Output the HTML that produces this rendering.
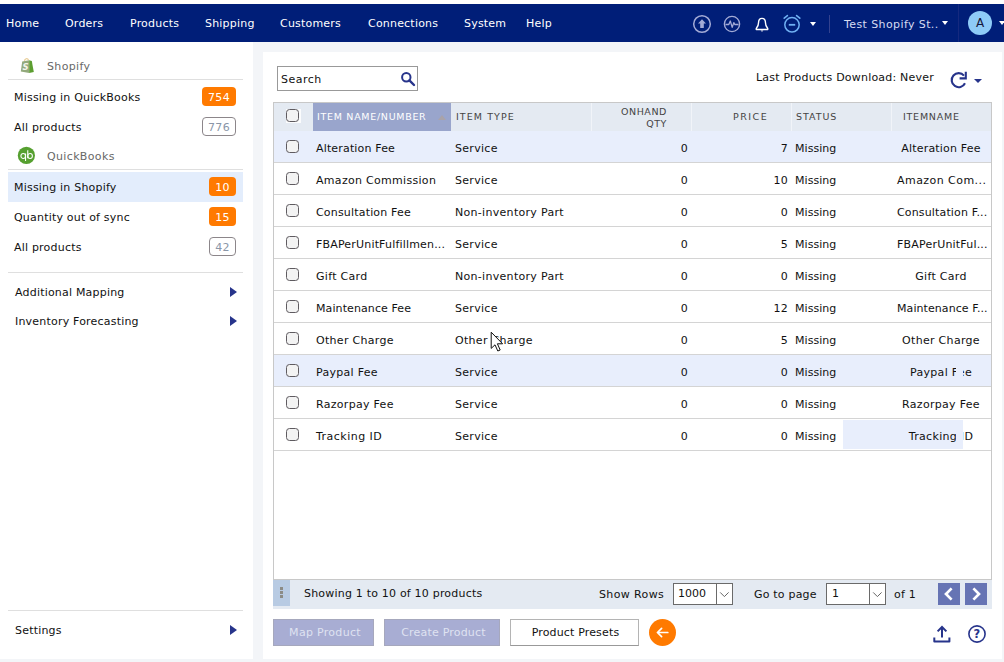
<!DOCTYPE html>
<html lang="en">
<head>
<meta charset="utf-8">
<title>Products</title>
<style>
*{box-sizing:border-box;margin:0;padding:0}
html,body{width:1004px;height:662px;overflow:hidden;background:#f3f5f8}
body{position:relative;font-family:"DejaVu Sans","Liberation Sans",sans-serif;font-size:11px;letter-spacing:0.2px;color:#111;line-height:16px}
.abs{position:absolute;white-space:nowrap}
#topstrip{left:0;top:0;width:1004px;height:4px;background:#fff}
#nav{left:0;top:4px;width:1004px;height:38px;background:#001e78}
#nav .mi{position:absolute;top:12px;color:#fff;font-size:11px;line-height:16px}
#side{left:0;top:42px;width:253px;height:617px;background:#fff}
#panel{left:263px;top:52px;width:739px;height:607px;background:#fff}
.sl{position:absolute;left:14px;font-size:11px;color:#111}
.hd{position:absolute;left:47px;font-size:11px;color:#686868;letter-spacing:0.35px}
.badge{position:absolute;height:19px;border-radius:4px;font-size:11px;line-height:21px;letter-spacing:0.3px;text-align:center;color:#fff;background:#ff7a00}
.badge.o{background:#fff;color:#8a96a8;border:1px solid #8c868a;line-height:19px}
.hr{position:absolute;height:1px;background:#dfdfdf}
.tri{position:absolute;width:0;height:0;border-left:7px solid #27348b;border-top:5px solid transparent;border-bottom:5px solid transparent}
/* table */
#thead{left:274px;top:103px;width:717px;height:28px;background:#e4eaf2}
.th{position:absolute;font-size:9.5px;letter-spacing:0.76px;color:#444;line-height:12px}
.row{position:absolute;left:274px;width:717px;height:32px;border-bottom:1px solid #d4d4d4;background:#fff}
.row.hl{background:#e8eefc}
.row span{position:absolute;white-space:nowrap;top:10px;letter-spacing:0.3px;font-size:11px;line-height:16px;color:#111}
.cb{position:absolute;left:12px;top:9px;width:13px;height:13px;border:1px solid #5f5b60;border-radius:3.5px;background:#f3f3f3}
.c1{left:42px}.c2{left:181px}
.c3{right:303px}.c4{right:203px}.c5{left:521px;letter-spacing:0.05px !important}
.c6{left:617px;width:100px;text-align:center;overflow:hidden;text-overflow:ellipsis;padding:0 3px}
.c6.t{padding:0 0 0 6px;letter-spacing:0.25px;text-align:left;overflow:visible;text-overflow:clip}
.btn{top:619px;height:27px;text-align:center;line-height:25px}
</style>
</head>
<body>
<div class="abs" id="topstrip"></div>
<div class="abs" id="nav">
  <span class="mi" style="left:6px">Home</span>
  <span class="mi" style="left:65px">Orders</span>
  <span class="mi" style="left:130px">Products</span>
  <span class="mi" style="left:205px">Shipping</span>
  <span class="mi" style="left:280px">Customers</span>
  <span class="mi" style="left:368px">Connections</span>
  <span class="mi" style="left:464px">System</span>
  <span class="mi" style="left:526px">Help</span>
  <span class="mi" id="store" style="left:844px;top:13px;color:#d6dbf2;letter-spacing:0.4px">Test Shopify St..</span>

  <svg class="abs" style="left:692px;top:10px" width="20" height="20" viewBox="0 0 20 20"><circle cx="10" cy="10" r="8.3" fill="none" stroke="#a3abd6" stroke-width="1.5"/><path d="M10 5.2 L14 9.6 H11.8 V14 H8.2 V9.6 H6 Z" fill="#a3abd6"/></svg>
  <svg class="abs" style="left:722px;top:10px" width="20" height="20" viewBox="0 0 20 20"><circle cx="10" cy="10" r="7.6" fill="none" stroke="#a3abd6" stroke-width="1.4"/><path d="M3.5 10.5 H6.8 L8.3 7 L10.2 13.4 L11.8 8.6 L12.8 10.5 H16.5" fill="none" stroke="#a3abd6" stroke-width="1.3" stroke-linejoin="round"/></svg>
  <svg class="abs" style="left:752px;top:10px" width="20" height="20" viewBox="0 0 20 20"><g transform="translate(0.6 1.9) scale(0.94)"><path d="M10 2.6 C7.2 2.6 6.3 5 6.3 7.4 C6.3 11 4.6 12.6 3.9 13.4 V14.4 H16.1 V13.4 C15.4 12.6 13.7 11 13.7 7.4 C13.7 5 12.8 2.6 10 2.6 Z" fill="none" stroke="#fff" stroke-width="1.5" stroke-linejoin="round"/><path d="M8.6 15.6 A1.5 1.5 0 0 0 11.4 15.6 Z" fill="#fff"/></g></svg>
  <svg class="abs" style="left:781px;top:9px" width="22" height="22" viewBox="0 0 22 22"><circle cx="11" cy="11.8" r="7.2" fill="none" stroke="#6fb0f3" stroke-width="1.5"/><path d="M7.8 11.8 H14.2" stroke="#6fb0f3" stroke-width="1.8"/><path d="M3.2 5.2 L6.4 2.6 M18.8 5.2 L15.6 2.6" stroke="#6fb0f3" stroke-width="1.6" stroke-linecap="round"/></svg>
  <div class="abs" style="left:810px;top:18px;border-left:3.5px solid transparent;border-right:3.5px solid transparent;border-top:4px solid #fff"></div>
  <div class="abs" style="left:829px;top:11px;width:1px;height:18px;background:#33428f"></div>
  <div class="abs" style="left:942px;top:17px;border-left:3.5px solid transparent;border-right:3.5px solid transparent;border-top:4px solid #fff"></div>
  <div class="abs" style="left:958px;top:0;width:1px;height:38px;background:#15297f"></div>
  <div class="abs" style="left:968px;top:7px;width:24px;height:24px;border-radius:12px;background:#8ecbf7;color:#14183c;font-size:12px;line-height:24px;text-align:center;letter-spacing:0">A</div>
  <div class="abs" style="left:999px;top:17px;border-left:3.5px solid transparent;border-right:3.5px solid transparent;border-top:4px solid #fff"></div>
</div>
<div class="abs" id="side">

  <svg class="abs" style="left:20px;top:15px" width="15" height="17" viewBox="0 0 15 17"><path d="M4.4 4.2 C4.6 1.6 7.4 0.6 8.6 3.2" fill="none" stroke="#e9cf9b" stroke-width="1.3"/><path d="M2.2 4.4 L9.2 3.2 L9.2 16 L0.8 14.6 Z" fill="#93a97c"/><path d="M9.2 3.2 L11.8 4 L13.8 15 L9.2 16 Z" fill="#5c9e31"/><text x="2.6" y="13" font-family="DejaVu Sans,sans-serif" font-size="8.5" font-weight="bold" font-style="italic" fill="#f4f4ea">S</text></svg>
  <svg class="abs" style="left:17px;top:104px" width="19" height="19" viewBox="0 0 19 19"><circle cx="9.4" cy="9.4" r="8.6" fill="#56a030"/><ellipse cx="6.2" cy="9.9" rx="2.3" ry="2.5" fill="none" stroke="#fff" stroke-width="1.05"/><path d="M8.55 7.6 V15" stroke="#fff" stroke-width="1.1"/><ellipse cx="13.1" cy="9.9" rx="2.3" ry="2.5" fill="none" stroke="#fff" stroke-width="1.05"/><path d="M10.75 4.2 V12.3" stroke="#fff" stroke-width="1.1"/></svg>
  <span class="hd" style="top:17px">Shopify</span>
  <div class="hr" style="left:8px;top:37px;width:235px"></div>
  <span class="sl" style="top:48px">Missing in QuickBooks</span>
  <span class="badge" style="left:202px;top:45px;width:34px">754</span>
  <span class="sl" style="top:78px">All products</span>
  <span class="badge o" style="left:202px;top:75px;width:34px">776</span>
  <span class="hd" style="top:107px">QuickBooks</span>
  <div class="hr" style="left:8px;top:127px;width:235px"></div>
  <div class="abs" style="left:8px;top:130px;width:235px;height:30px;background:#e3edfc"></div>
  <span class="sl" style="top:138px">Missing in Shopify</span>
  <span class="badge" style="left:209px;top:135px;width:27px">10</span>
  <span class="sl" style="top:168px">Quantity out of sync</span>
  <span class="badge" style="left:209px;top:165px;width:27px">15</span>
  <span class="sl" style="top:198px">All products</span>
  <span class="badge o" style="left:209px;top:195px;width:27px">42</span>
  <div class="hr" style="left:8px;top:230px;width:235px"></div>
  <span class="sl" style="left:15px;top:243px">Additional Mapping</span>
  <div class="tri" style="left:230px;top:245px"></div>
  <span class="sl" style="left:15px;top:272px">Inventory Forecasting</span>
  <div class="tri" style="left:230px;top:274px"></div>
  <div class="hr" style="left:8px;top:568px;width:235px"></div>
  <span class="sl" style="left:15px;top:581px">Settings</span>
  <div class="tri" style="left:230px;top:583px"></div>
</div>
<div class="abs" id="panel"></div>
<!-- search -->
<div class="abs" style="left:277px;top:66px;width:141px;height:25px;border:1px solid #999;background:#fff"></div>
<span class="abs" style="left:281px;top:72px;font-size:11px;letter-spacing:0.5px">Search</span>
<svg class="abs" style="left:399px;top:70px" width="18" height="18" viewBox="0 0 18 18"><circle cx="7.3" cy="7.2" r="4.2" fill="none" stroke="#27348b" stroke-width="2"/><path d="M10.4 10.4 L15 15" stroke="#27348b" stroke-width="2.4" stroke-linecap="round"/></svg>
<span class="abs" style="left:756px;top:70px;font-size:11px">Last Products Download: Never</span>
<svg class="abs" style="left:949px;top:70px" width="20" height="20" viewBox="0 0 20 20"><path d="M16 13.2 A7 7 0 1 1 15 5.6" fill="none" stroke="#27348b" stroke-width="2.1"/><path d="M16.8 1.8 V8.4 H10.6" fill="none" stroke="#27348b" stroke-width="2.1"/></svg>
<div class="abs" style="left:974px;top:79px;border-left:4px solid transparent;border-right:4px solid transparent;border-top:4.5px solid #27348b"></div>
<!-- table -->
<div class="abs" style="left:273px;top:102px;width:719px;height:478px;border:1px solid #c8c8c8;background:#fff"></div>
<div class="abs" id="thead">
  <div class="abs" style="left:39px;top:0;width:138px;height:28px;background:#99a5cc"></div>
  <span class="th" style="left:43px;top:8px;color:#fff;letter-spacing:0.7px">ITEM NAME/NUMBER</span>
  <div class="abs" style="left:164px;top:12px;border-left:4.5px solid transparent;border-right:4.5px solid transparent;border-bottom:5px solid #a9a3a9"></div>
  <span class="th" style="left:182px;top:8px;letter-spacing:1.07px">ITEM TYPE</span>
  <span class="th" style="right:324px;top:3px;text-align:right;line-height:11.5px;letter-spacing:0.57px">ONHAND<br>QTY</span>
  <span class="th" style="left:459px;top:8px;letter-spacing:1.48px">PRICE</span>
  <span class="th" style="left:522px;top:8px;letter-spacing:0.93px">STATUS</span>
  <span class="th" style="left:629px;top:8px">ITEMNAME</span>
  <div class="abs" style="left:317px;top:0;width:1px;height:28px;background:#f1f4f9"></div><div class="abs" style="left:417px;top:0;width:1px;height:28px;background:#f1f4f9"></div><div class="abs" style="left:517px;top:0;width:1px;height:28px;background:#f1f4f9"></div><div class="abs" style="left:617px;top:0;width:1px;height:28px;background:#f1f4f9"></div>
  <div class="abs" style="left:12px;top:6px;width:15px;height:14px;background:#fbfcfd"></div><div class="cb" style="left:12px;top:6px"></div>
</div>
<div class="abs" style="left:843px;top:420px;width:120px;height:29px;background:#e8eefc"></div>
<div class="row hl" style="top:131px"><div class="cb"></div><span class="c1" style="letter-spacing:0.16px">Alteration Fee</span><span class="c2">Service</span><span class="c3">0</span><span class="c4">7</span><span class="c5">Missing</span><span class="c6" style="letter-spacing:0.18px">Alteration Fee</span></div>
<div class="row" style="top:163px"><div class="cb"></div><span class="c1">Amazon Commission</span><span class="c2">Service</span><span class="c3">0</span><span class="c4">10</span><span class="c5">Missing</span><span class="c6 t" style="letter-spacing:0.45px">Amazon Com...</span></div>
<div class="row" style="top:195px"><div class="cb"></div><span class="c1" style="letter-spacing:0.18px">Consultation Fee</span><span class="c2">Non-inventory Part</span><span class="c3">0</span><span class="c4">0</span><span class="c5">Missing</span><span class="c6 t" style="letter-spacing:0.15px">Consultation F...</span></div>
<div class="row" style="top:227px"><div class="cb"></div><span class="c1" style="letter-spacing:0.18px">FBAPerUnitFulfillmen...</span><span class="c2">Service</span><span class="c3">0</span><span class="c4">5</span><span class="c5">Missing</span><span class="c6 t" style="letter-spacing:0.2px">FBAPerUnitFul...</span></div>
<div class="row" style="top:259px"><div class="cb"></div><span class="c1">Gift Card</span><span class="c2">Non-inventory Part</span><span class="c3">0</span><span class="c4">0</span><span class="c5">Missing</span><span class="c6">Gift Card</span></div>
<div class="row" style="top:291px"><div class="cb"></div><span class="c1" style="letter-spacing:0.1px">Maintenance Fee</span><span class="c2">Service</span><span class="c3">0</span><span class="c4">12</span><span class="c5">Missing</span><span class="c6 t" style="letter-spacing:0.08px">Maintenance F...</span></div>
<div class="row" style="top:323px"><div class="cb"></div><span class="c1">Other Charge</span><span class="c2">Other Charge</span><span class="c3">0</span><span class="c4">5</span><span class="c5">Missing</span><span class="c6">Other Charge</span></div>
<div class="row hl" style="top:355px"><div class="cb"></div><span class="c1">Paypal Fee</span><span class="c2">Service</span><span class="c3">0</span><span class="c4">0</span><span class="c5">Missing</span><span class="c6">Paypal Fee</span></div>
<div class="row" style="top:387px"><div class="cb"></div><span class="c1">Razorpay Fee</span><span class="c2">Service</span><span class="c3">0</span><span class="c4">0</span><span class="c5">Missing</span><span class="c6">Razorpay Fee</span></div>
<div class="row" style="top:419px;background:transparent"><div class="cb"></div><span class="c1" style="letter-spacing:0.48px">Tracking ID</span><span class="c2">Service</span><span class="c3">0</span><span class="c4">0</span><span class="c5">Missing</span><span class="c6">Tracking ID</span></div>
<div class="abs" style="left:956px;top:362px;width:7px;height:20px;background:#e8eefc"></div>
<div class="abs" style="left:956px;top:424px;width:7px;height:22px;background:#e8eefc"></div>
<!-- footer -->
<div class="abs" id="tfoot" style="left:273px;top:580px;width:719px;height:29px;background:#e4eaf2"></div>
<div class="abs" style="left:273px;top:580px;width:17px;height:26px;background:#b8cbe3"></div>
<div class="abs" style="left:280px;top:587px;width:3px;height:3px;background:#8b8b86"></div>
<div class="abs" style="left:280px;top:591px;width:3px;height:3px;background:#8b8b86"></div>
<div class="abs" style="left:280px;top:595px;width:3px;height:3px;background:#8b8b86"></div>
<span class="abs" style="left:304px;top:586px">Showing 1 to 10 of 10 products</span>
<span class="abs" style="left:599px;top:587px;letter-spacing:0.38px">Show Rows</span>
<div class="abs" style="left:673px;top:583px;width:60px;height:22px;border:1px solid #6a6a6a;background:#fff"></div>
<div class="abs" style="left:716px;top:584px;width:1px;height:20px;background:#6a6a6a"></div>
<span class="abs" style="left:678px;top:586px;letter-spacing:0">1000</span>
<svg class="abs" style="left:719px;top:590px" width="11" height="9" viewBox="0 0 11 9"><path d="M1.2 2.4 L5.4 6.6 L9.6 2.4" fill="none" stroke="#666" stroke-width="1"/></svg>
<span class="abs" style="left:754px;top:587px">Go to page</span>
<div class="abs" style="left:826px;top:583px;width:60px;height:22px;border:1px solid #6a6a6a;background:#fff"></div>
<div class="abs" style="left:869px;top:584px;width:1px;height:20px;background:#6a6a6a"></div>
<span class="abs" style="left:832px;top:586px">1</span>
<svg class="abs" style="left:872px;top:590px" width="11" height="9" viewBox="0 0 11 9"><path d="M1.2 2.4 L5.4 6.6 L9.6 2.4" fill="none" stroke="#666" stroke-width="1"/></svg>
<span class="abs" style="left:894px;top:587px">of 1</span>
<div class="abs" style="left:938px;top:583px;width:22px;height:22px;background:#6674b4"></div>
<div class="abs" style="left:965px;top:583px;width:22px;height:22px;background:#6674b4"></div>
<svg class="abs" style="left:938px;top:583px" width="22" height="22" viewBox="0 0 22 22"><path d="M13.6 5.4 L8 11 L13.6 16.6" fill="none" stroke="#fff" stroke-width="2.7"/></svg>
<svg class="abs" style="left:965px;top:583px" width="22" height="22" viewBox="0 0 22 22"><path d="M8.4 5.4 L14 11 L8.4 16.6" fill="none" stroke="#fff" stroke-width="2.7"/></svg>
<!-- buttons -->
<div class="abs btn" style="left:273px;width:101px;background:#a8add3;border:1px solid #a6a8bd;color:#dfe2f1;letter-spacing:0.3px;padding-left:3px">Map Product</div>
<div class="abs btn" style="left:384px;width:116px;background:#a8add3;border:1px solid #a6a8bd;color:#dfe2f1;padding-left:3px">Create Product</div>
<div class="abs btn" style="left:510px;width:129px;background:#fff;border:1px solid #b4b4b4;border-bottom-color:#999;color:#111;letter-spacing:0.15px;padding-left:2px">Product Presets</div>
<div class="abs" style="left:649px;top:619px;width:27px;height:27px;border-radius:14px;background:#ff7a00"></div>
<svg class="abs" style="left:649px;top:619px" width="27" height="27" viewBox="0 0 27 27"><path d="M18.8 13.5 H8.6 M12.6 9.3 L8.4 13.5 L12.6 17.7" fill="none" stroke="#fff" stroke-width="1.7" stroke-linecap="round" stroke-linejoin="round"/></svg>
<svg class="abs" style="left:930px;top:623px" width="24" height="22" viewBox="0 0 24 22"><path d="M4.3 14.4 V18.4 H19.4 V14.4" fill="none" stroke="#27348b" stroke-width="2" stroke-linejoin="round"/><path d="M12 14.6 V4.2 M7.6 8.4 L12 4 L16.4 8.4" fill="none" stroke="#27348b" stroke-width="2"/></svg>
<svg class="abs" style="left:967px;top:624px" width="20" height="20" viewBox="0 0 20 20"><circle cx="10" cy="10" r="8.1" fill="none" stroke="#27348b" stroke-width="1.6"/><text x="10" y="14.2" text-anchor="middle" font-family="DejaVu Sans,sans-serif" font-weight="bold" font-size="11.5" fill="#27348b">?</text></svg>
<!-- cursor -->
<svg class="abs" style="left:490px;top:331px" width="15" height="22" viewBox="0 0 15 22"><path d="M1.2 1.2 V17.4 L5 13.8 L7.8 20 L10.2 19 L7.4 12.8 H12.6 Z" fill="#fff" stroke="#111" stroke-width="1"/></svg>
</body>
</html>
